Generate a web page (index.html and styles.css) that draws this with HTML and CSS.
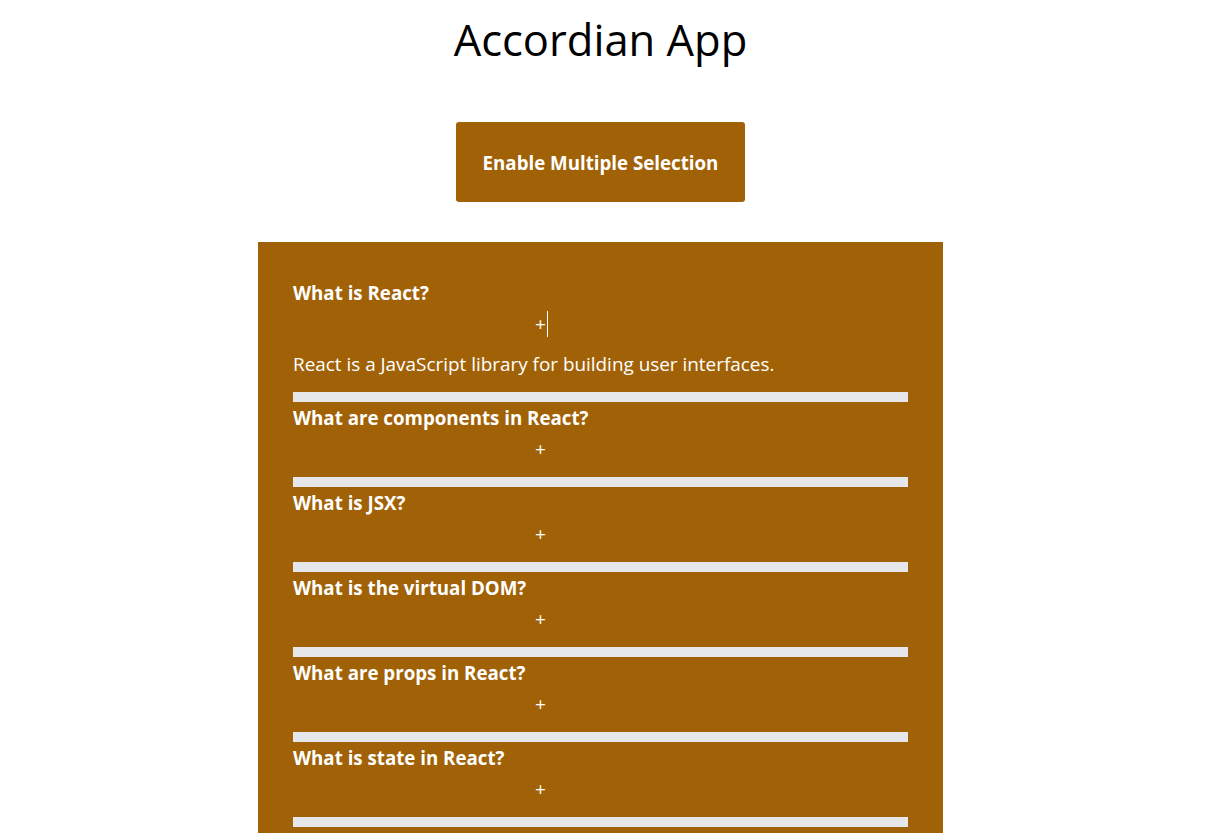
FILE: index.html
```html
<!DOCTYPE html>
<html lang="en">
<head>
<meta charset="utf-8">
<title>Accordian App</title>
<link rel="stylesheet" href="styles.css">
</head>
<body>
<div class="app">
  <h1 class="title">Accordian App</h1>
  <button class="toggle">Enable Multiple Selection</button>
  <div class="accordion">
    <div class="item">
      <div class="question">What is React?</div>
      <div class="icon">+<span class="caret"></span></div>
      <div class="answer">React is a JavaScript library for building user interfaces.</div>
    </div>
    <div class="item">
      <div class="question">What are components in React?</div>
      <div class="icon">+</div>
    </div>
    <div class="item">
      <div class="question">What is JSX?</div>
      <div class="icon">+</div>
    </div>
    <div class="item">
      <div class="question">What is the virtual DOM?</div>
      <div class="icon">+</div>
    </div>
    <div class="item">
      <div class="question">What are props in React?</div>
      <div class="icon">+</div>
    </div>
    <div class="item">
      <div class="question">What is state in React?</div>
      <div class="icon">+</div>
    </div>
  </div>
</div>
</body>
</html>
```

FILE: styles.css
```css
html, body {
  margin: 0;
  padding: 0;
  background: #ffffff;
  overflow: hidden;
}

body {
  font-family: "Open Sans", "Noto Sans", "Liberation Sans", sans-serif;
  color: #000000;
}

.app {
  display: flex;
  flex-direction: column;
  align-items: center;
  padding-right: 5px;
}

.title {
  margin: 14px 0 0 0;
  font-size: 43.5px;
  font-weight: 400;
  line-height: 52px;
}

.toggle {
  margin-top: 56px;
  height: 80px;
  width: 289px;
  padding: 0;
  border: none;
  border-radius: 3px;
  background: #a16207;
  color: #ffffff;
  font-family: inherit;
  font-size: 18.72px;
  font-weight: 700;
  cursor: pointer;
}

.accordion {
  margin-top: 40px;
  width: 615px;
  padding: 35px;
  background: #a16207;
  color: #ffffff;
}

.item {
  padding: 4px 0 16px 0;
  border-bottom: 10px solid #e5e7eb;
}

.question {
  font-size: 18.72px;
  font-weight: 700;
  line-height: 24px;
}

.icon {
  margin-top: 7px;
  padding-left: 242px;
  height: 24px;
  font-size: 19px;
  line-height: 24px;
  display: flex;
  align-items: center;
}

.caret {
  display: inline-block;
  width: 1px;
  height: 26px;
  margin-left: 1px;
  background: #ffffff;
}

.answer {
  margin-top: 16px;
  font-size: 18.9px;
  line-height: 24px;
}
```
